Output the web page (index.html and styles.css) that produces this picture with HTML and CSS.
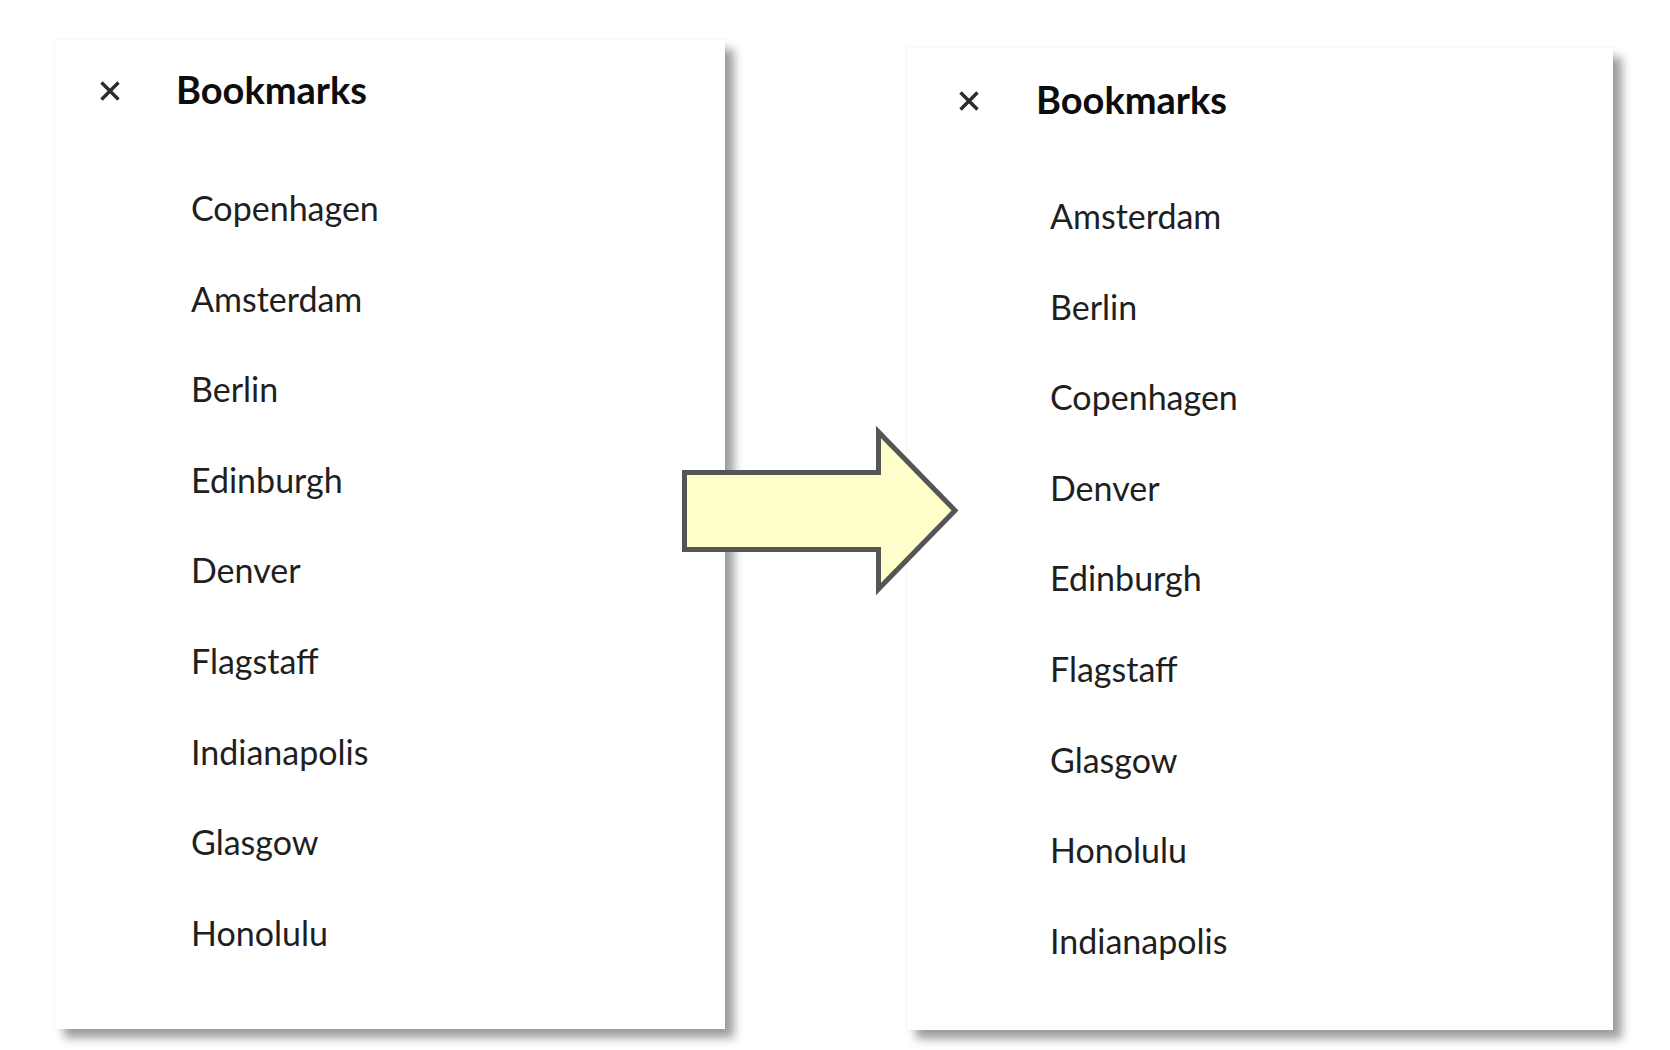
FILE: index.html
```html
<!DOCTYPE html>
<html lang="en">
<head>
<meta charset="utf-8">
<title>Bookmarks sorting</title>
<link rel="stylesheet" href="styles.css">
</head>
<body>
<div class="stage">
  <section class="panel panel-left">
    <header class="panel-header">
      <svg class="close-icon" viewBox="0 0 20 20" aria-hidden="true"><path d="M1.5 1.5 L18.5 18.5 M18.5 1.5 L1.5 18.5"/></svg>
      <h2 class="panel-title">Bookmarks</h2>
    </header>
    <ul class="bookmark-list">
      <li>Copenhagen</li>
      <li>Amsterdam</li>
      <li>Berlin</li>
      <li>Edinburgh</li>
      <li>Denver</li>
      <li>Flagstaff</li>
      <li>Indianapolis</li>
      <li>Glasgow</li>
      <li>Honolulu</li>
    </ul>
  </section>
  <section class="panel panel-right">
    <header class="panel-header">
      <svg class="close-icon" viewBox="0 0 20 20" aria-hidden="true"><path d="M1.5 1.5 L18.5 18.5 M18.5 1.5 L1.5 18.5"/></svg>
      <h2 class="panel-title">Bookmarks</h2>
    </header>
    <ul class="bookmark-list">
      <li>Amsterdam</li>
      <li>Berlin</li>
      <li>Copenhagen</li>
      <li>Denver</li>
      <li>Edinburgh</li>
      <li>Flagstaff</li>
      <li>Glasgow</li>
      <li>Honolulu</li>
      <li>Indianapolis</li>
    </ul>
  </section>
  <svg class="arrow" viewBox="0 0 1670 1050" aria-hidden="true">
    <polygon points="684.5,472.5 878.5,472.5 878.5,432 955,510.5 878.5,589 878.5,549.5 684.5,549.5"/>
  </svg>
</div>
</body>
</html>
```

FILE: styles.css
```css
* { box-sizing: border-box; }
html, body {
  margin: 0;
  padding: 0;
  background: #ffffff;
}
body {
  font-family: Lato, "Open Sans", "Noto Sans", sans-serif;
  color: #1f1f1f;
  width: 1670px;
  height: 1050px;
  overflow: hidden;
}
.stage {
  position: relative;
  display: flex;
  align-items: flex-start;
  gap: 182px;
  padding-left: 55px;
  height: 1050px;
}
.panel {
  background: #ffffff;
  box-shadow: 9px 9px 9px rgba(0, 0, 0, 0.38), 0 0 3px rgba(0, 0, 0, 0.07);
}
.panel-left {
  margin-top: 40px;
  width: 670px;
  height: 989px;
  padding-left: 45px;
}
.panel-right {
  margin-top: 48px;
  width: 706px;
  height: 982px;
  padding-left: 52px;
}
.panel-header {
  display: flex;
  align-items: center;
  gap: 56px;
  padding-top: 23px;
  height: 74px;
}
.panel-right .panel-header {
  gap: 57px;
  padding-top: 25px;
  height: 76px;
}
.close-icon {
  width: 20px;
  height: 20px;
  flex: none;
  margin-top: 5px;
}
.close-icon path {
  stroke: #2c2c2c;
  stroke-width: 3.4;
  stroke-linecap: butt;
  fill: none;
}
.panel-title {
  margin: 0;
  font-size: 38px;
  line-height: 50px;
  font-weight: 700;
  color: #0d0d0d;
}
.bookmark-list {
  list-style: none;
  margin: 49px 0 0 0;
  padding: 0 0 0 91px;
}
.panel-right .bookmark-list {
  margin-top: 47px;
}
.bookmark-list li {
  font-size: 34px;
  line-height: 90.6px;
  height: 90.6px;
  color: #1f1f1f;
}
.arrow {
  position: absolute;
  left: 0;
  top: 0;
  width: 1670px;
  height: 1050px;
  pointer-events: none;
}
.arrow polygon {
  fill: #ffffcc;
  stroke: #555555;
  stroke-width: 5;
  stroke-linejoin: miter;
}
```
